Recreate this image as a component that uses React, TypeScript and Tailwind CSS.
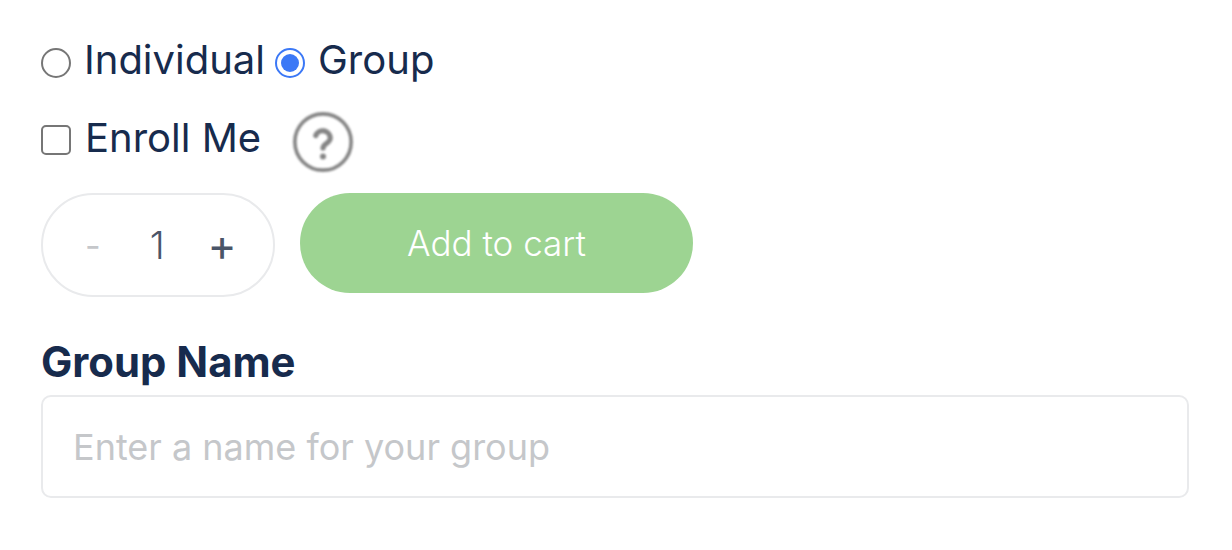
export default function App() {
  return (
    <div className="min-h-[550px] bg-white pl-[41px] pr-[43px] pt-[34px] font-['Inter',sans-serif] text-[#172b4d]">
      <div className="flex h-[52px] items-center text-[40px]">
        <input type="radio" name="kind" className="mt-[6px] h-[30px] w-[30px] appearance-none rounded-full border-2 border-[#767676] bg-white" />
        <label className="ml-[13px]">Individual</label>
        <span className="ml-[10px] mt-[6px] flex h-[30px] w-[30px] items-center justify-center rounded-full border-2 border-[#3b78f6]">
          <span className="h-[18px] w-[18px] rounded-full bg-[#3b78f6]" />
        </span>
        <label className="ml-[13px]">Group</label>
      </div>

      <div className="mt-[26px] flex h-[52px] items-center text-[40px]">
        <input type="checkbox" className="mt-[4px] h-[30px] w-[30px] appearance-none rounded-[5px] border-2 border-[#767676] bg-white" />
        <label className="ml-[14px]">Enroll Me</label>
        <svg className="ml-[31px] mt-[8px] h-[62px] w-[62px] blur-[0.8px]" viewBox="0 0 24 24" fill="none" stroke="#858585" strokeWidth="1.4" strokeLinecap="round" strokeLinejoin="round">
          <circle cx="12" cy="12" r="10.9" />
          <path d="M9.2 9.5a2.9 2.9 0 0 1 5.6 1c0 1.9-2.8 2.2-2.8 3.8" strokeWidth="2" />
          <path d="M12 17.6h.01" strokeWidth="2.3" />
        </svg>
      </div>

      <div className="mt-[29px] flex items-start">
        <div className="flex h-[104px] w-[234px] items-center rounded-full border-2 border-[#e9eaec] text-[#4a5568]">
          <span className="ml-[42px] text-[34px] text-[#c5c7ca]">-</span>
          <span className="ml-[49px] text-[38px] font-light">1</span>
          <span className="ml-[43px] text-[44px]">+</span>
        </div>
        <button className="ml-[25px] h-[100px] w-[393px] rounded-full bg-[#9dd492] text-[35px] font-light text-white">
          Add to cart
        </button>
      </div>

      <div className="mt-[40px] text-[41.8px] font-bold leading-[50px]">Group Name</div>
      <input
        placeholder="Enter a name for your group"
        className="mt-[8px] block h-[103px] w-full rounded-[10px] border-2 border-[#e9eaec] bg-white px-[30px] text-[36px] outline-none placeholder:text-[#c5c7ca]"
      />
    </div>
  );
}
